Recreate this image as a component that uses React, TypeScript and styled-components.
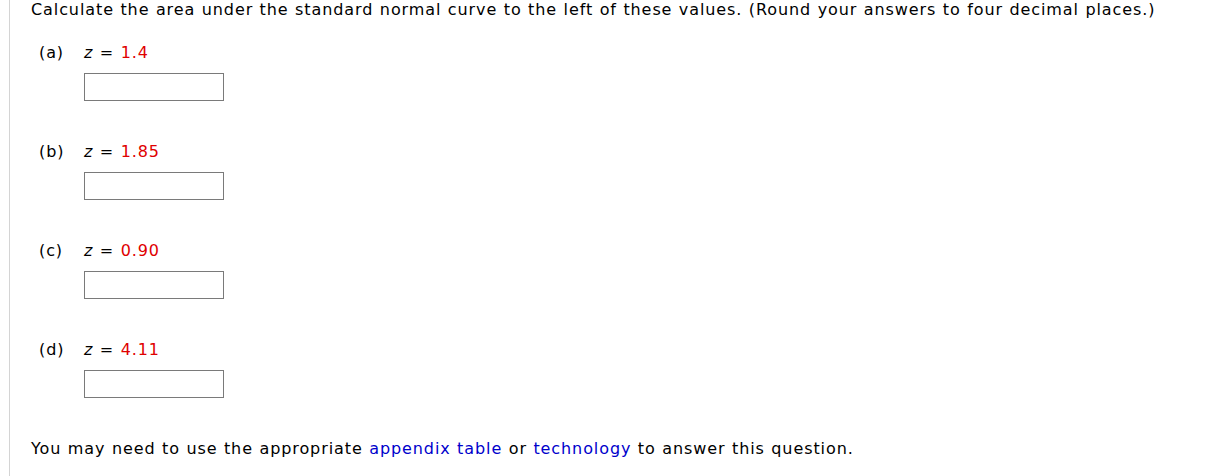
import React from "react";
import styled, { createGlobalStyle } from "styled-components";

const Global = createGlobalStyle`
  html, body { margin: 0; padding: 0; background: #fff; }
  body {
    font-family: Verdana, "DejaVu Sans", sans-serif;
    font-size: 16px;
    letter-spacing: 0.91px;
    word-spacing: 0.5px;
    color: #000;
  }
`;

const Page = styled.div`
  margin-left: 9px;
  border-left: 1px solid #d4d4d4;
  min-height: 476px;
  box-sizing: border-box;
  padding: 0 0 0 21px;
  line-height: 19px;
`;

const Prompt = styled.div`
  white-space: nowrap;
`;

const Parts = styled.div`
  display: flex;
  flex-direction: column;
  margin-top: 24px;
  gap: 41px;
`;

const Part = styled.div`
  display: grid;
  grid-template-columns: 45px auto;
  padding-left: 8px;
`;

const PartLabel = styled.span``;

const PartBody = styled.div`
  display: flex;
  flex-direction: column;
  gap: 11px;
`;

const Expr = styled.div`
  white-space: nowrap;
`;

const Var = styled.i`
  font-style: italic;
`;

const Value = styled.span`
  color: #e00000;
`;

const AnswerBox = styled.input`
  box-sizing: border-box;
  width: 140px;
  height: 28px;
  margin: 0;
  border: 1px solid #7a7a7a;
  border-radius: 0;
  background: #fff;
  padding: 2px 4px;
  font: inherit;
`;

const Footer = styled.div`
  margin-top: 41px;
  white-space: nowrap;
`;

const Link = styled.a`
  color: #0000cc;
  text-decoration: none;
`;

const parts = [
  { label: "(a)", value: "1.4" },
  { label: "(b)", value: "1.85" },
  { label: "(c)", value: "0.90" },
  { label: "(d)", value: "4.11" },
];

export default function App() {
  return (
    <>
      <Global />
      <Page>
        <Prompt>
          Calculate the area under the standard normal curve to the left of these values. (Round your answers to four decimal places.)
        </Prompt>
        <Parts>
          {parts.map((p) => (
            <Part key={p.label}>
              <PartLabel>{p.label}</PartLabel>
              <PartBody>
                <Expr>
                  <Var>z</Var> = <Value>{p.value}</Value>
                </Expr>
                <AnswerBox type="text" aria-label={`answer ${p.label}`} />
              </PartBody>
            </Part>
          ))}
        </Parts>
        <Footer>
          You may need to use the appropriate <Link href="#">appendix table</Link> or{" "}
          <Link href="#">technology</Link> to answer this question.
        </Footer>
      </Page>
    </>
  );
}
